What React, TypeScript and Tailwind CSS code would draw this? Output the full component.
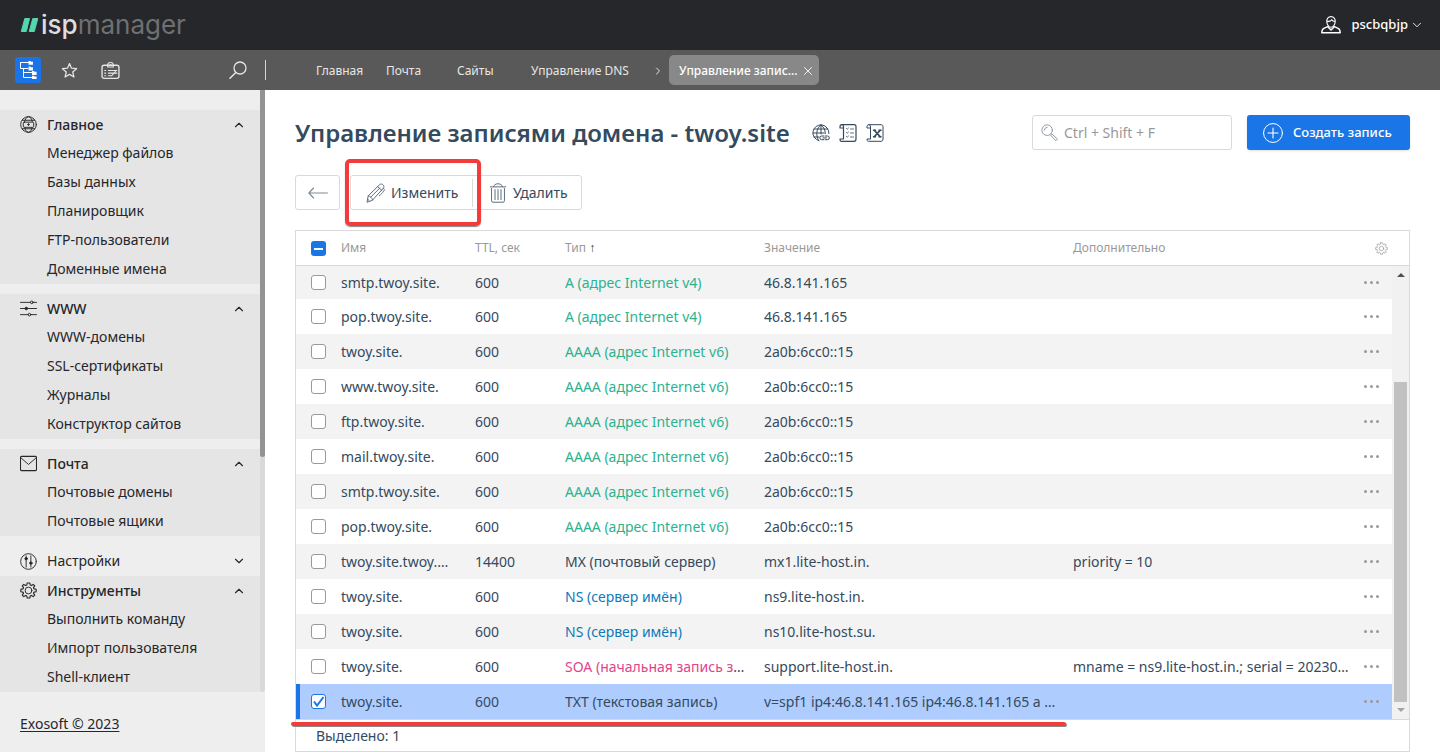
import type { ReactNode } from 'react';
import { ChevronDown, ChevronRight, ChevronUp, X } from 'lucide-react';
import clsx from 'clsx';

interface IconProps {
  className?: string;
  size?: number;
  children?: ReactNode;
}

function Icon({ className, size = 18, children }: IconProps) {
  return (
    <svg
      width={size}
      height={size}
      viewBox="0 0 18 18"
      fill="none"
      stroke="currentColor"
      strokeLinecap="round"
      strokeLinejoin="round"
      className={clsx('shrink-0', className)}
      aria-hidden="true"
    >
      {children}
    </svg>
  );
}

const GEAR =
  'M7.6 1h2.8l.4 2.2 1.3.6 1.9-1.3 1.6 1.6-1.3 1.9.6 1.3 2.2.4v2.6l-2.2.4-.6 1.3 1.3 1.9-1.6 1.6-1.9-1.3-1.3.6-.4 2.2H7.6l-.4-2.2-1.3-.6L4 15.5l-1.6-1.6L3.700 12l-.6-1.300L.9 10.300V7.700l2.200-.4.6-1.300L2.400 4.100 4 2.500l1.900 1.300 1.300-.6z';

const menuIcons = {
  globe: (
    <Icon size={17}>
      <circle cx="9" cy="9" r="8.3" />
      <ellipse cx="9" cy="9" rx="4.4" ry="8.3" />
      <path d="M2.500 4.500h13M2.500 13.500h13" />
      <rect x="3.500" y="6.500" width="11" height="5.500" rx="1" fill="#e5e5e5" />
      <path d="M8 9h2M9 8v2" />
    </Icon>
  ),
  sliders: (
    <Icon size={17}>
      <path d="M.5 2.500h10.500M14 2.500h3.500M.5 9h5M8 9h9.500M.5 15.500h8.300M11.500 15.500h6" />
      <circle cx="12.500" cy="2.500" r="1.400" />
      <circle cx="6.700" cy="9" r="1.400" fill="currentColor" />
      <circle cx="10" cy="15.500" r="1.400" />
    </Icon>
  ),
  mail: (
    <Icon size={17}>
      <rect x=".5" y="1.500" width="17" height="15" rx="1.500" strokeWidth="1.200" />
      <path d="m1.500 3.500 7.500 6.500 7.500-6.500" />
    </Icon>
  ),
  settings: (
    <Icon size={17}>
      <circle cx="9" cy="9" r="8.300" />
      <path d="M6.500 3v2M6.500 7.500V15M11.500 3v6.500M11.500 12v3" />
      <circle cx="6.500" cy="6" r="1.300" fill="currentColor" />
      <circle cx="11.500" cy="10.700" r="1.300" fill="currentColor" />
    </Icon>
  ),
  tools: (
    <Icon size={17}>
      <path d={GEAR} strokeWidth="1.200" />
      <circle cx="9" cy="9" r="3.600" />
    </Icon>
  ),
};

interface MenuSection {
  title: string;
  icon: keyof typeof menuIcons;
  items: string[];
  tight?: boolean;
}

const MENU: MenuSection[] = [
  {
    title: 'Главное',
    icon: 'globe',
    items: ['Менеджер файлов', 'Базы данных', 'Планировщик', 'FTP-пользователи', 'Доменные имена'],
  },
  {
    title: 'WWW',
    icon: 'sliders',
    items: ['WWW-домены', 'SSL-сертификаты', 'Журналы', 'Конструктор сайтов'],
  },
  { title: 'Почта', icon: 'mail', items: ['Почтовые домены', 'Почтовые ящики'] },
  { title: 'Настройки', icon: 'settings', items: [], tight: true },
  {
    title: 'Инструменты',
    icon: 'tools',
    items: ['Выполнить команду', 'Импорт пользователя', 'Shell-клиент'],
  },
];

interface DnsRecord {
  name: string;
  ttl: string;
  type: string;
  value: string;
  extra?: string;
  cut?: boolean;
  selected?: boolean;
}

const A = 'A (адрес Internet v4)';
const AAAA = 'AAAA (адрес Internet v6)';
const NS = 'NS (сервер имён)';

const RECORDS: DnsRecord[] = [
  { name: 'smtp.twoy.site.', ttl: '600', type: A, value: '46.8.141.165' },
  { name: 'pop.twoy.site.', ttl: '600', type: A, value: '46.8.141.165' },
  { name: 'twoy.site.', ttl: '600', type: AAAA, value: '2a0b:6cc0::15' },
  { name: 'www.twoy.site.', ttl: '600', type: AAAA, value: '2a0b:6cc0::15' },
  { name: 'ftp.twoy.site.', ttl: '600', type: AAAA, value: '2a0b:6cc0::15' },
  { name: 'mail.twoy.site.', ttl: '600', type: AAAA, value: '2a0b:6cc0::15' },
  { name: 'smtp.twoy.site.', ttl: '600', type: AAAA, value: '2a0b:6cc0::15' },
  { name: 'pop.twoy.site.', ttl: '600', type: AAAA, value: '2a0b:6cc0::15' },
  { name: 'twoy.site.twoy.…', ttl: '14400', type: 'MX (почтовый сервер)', value: 'mx1.lite-host.in.', extra: 'priority = 10' },
  { name: 'twoy.site.', ttl: '600', type: NS, value: 'ns9.lite-host.in.' },
  { name: 'twoy.site.', ttl: '600', type: NS, value: 'ns10.lite-host.su.' },
  {
    name: 'twoy.site.',
    ttl: '600',
    type: 'SOA (начальная запись з',
    cut: true,
    value: 'support.lite-host.in.',
    extra: 'mname = ns9.lite-host.in.; serial = 20230…',
  },
  {
    name: 'twoy.site.',
    ttl: '600',
    type: 'TXT (текстовая запись)',
    value: 'v=spf1 ip4:46.8.141.165 ip4:46.8.141.165 a …',
    selected: true,
  },
];

const TYPE_COLORS: Record<string, string> = {
  A: 'text-[#2bb291]',
  AAAA: 'text-[#2bb291]',
  NS: 'text-[#0f78b9]',
  SOA: 'text-[#e0448b]',
};

function Header() {
  return (
    <header className="flex h-[50px] items-center justify-between bg-[#26272b] pl-5 pr-4">
      <a href="#" className="flex items-center gap-0.5" aria-label="ispmanager">
        <svg width="19" height="14" viewBox="0 0 19 14" fill="#55d6ae" aria-hidden="true">
          <path d="M4.800.5h4.700L6.300 13.500H1.300zM12.800.5h5l-3.500 13H9.200z" stroke="#55d6ae" strokeLinejoin="round" />
        </svg>
        <span className="font-['Inter'] text-[26px] leading-8 text-[#6f7073]">
          <span className="font-medium text-[#dedede]">isp</span>manager
        </span>
      </a>
      <button type="button" className="flex items-center text-[13px] font-medium text-white">
        <Icon size={20} className="mr-2.5">
          <path d="M9 1.500c-2.500 0-4 1.800-3.800 4.300C5.300 8.500 7 11 9 11s3.700-2.500 3.800-5.200C13 3.300 11.500 1.500 9 1.500zM5.300 5.500c2 .5 3.600 0 4.300-1.300.6 1 1.700 1.500 3.100 1.600" />
          <path d="M6.500 10.300 2.500 12C1.300 12.600.8 13.800.7 16h16.600c-.1-2.200-.6-3.400-1.800-4l-4-1.700M6.300 10.700 9 13.500l2.700-2.800" strokeWidth="1.300" />
        </Icon>
        pscbqbjp
        <ChevronDown size={14} strokeWidth={1.500} className="ml-0.5" />
      </button>
    </header>
  );
}

function TabBar() {
  return (
    <div className="flex h-10 items-center bg-[#595959] text-[#e6e6e6]">
      <div className="flex w-[266px] shrink-0 items-center pl-[15px]">
        <button type="button" aria-label="Меню" className="flex size-[26px] items-center justify-center rounded-[3px] bg-[#1a73e8] text-white">
          <Icon>
            <path d="M1 1.500h9M1.500 1.500v6H9M4.500 7.500v9M4.500 11.500H13M4.500 16.500H13" strokeLinecap="butt" />
            <path d="M9.500 0h2l.6.700H14V3.800H9.500zM9.500 5.500h2l.6.700H14v3.300H9.500zM13 10h2l.6.700h2V14H13zM13 14.800h2l.6.600h2V18H13z" fill="currentColor" stroke="none" />
          </Icon>
        </button>
        <button type="button" aria-label="Избранное" className="ml-5">
          <Icon size={17}>
            <path d="m9 1.700 2.100 4.900 5.400.5-4.100 3.500 1.300 5.300L9 13.100l-4.700 2.800 1.300-5.300-4.100-3.500 5.400-.5z" strokeWidth="1.300" />
          </Icon>
        </button>
        <button type="button" aria-label="Карточка" className="ml-[23px]">
          <Icon size={19}>
            <rect x="1" y="4" width="16" height="12.500" rx="2" strokeWidth="1.300" />
            <path d="M6.300 5.700V4.200a2.700 2.700 0 0 1 5.400 0v1.500zM8.500 3.500h1" />
            <path d="M3.500 9h1M3.500 11.500h1M3.500 14h1M7 9h8M7 11.500h8M7 14h3l4.500-5" />
          </Icon>
        </button>
        <button type="button" aria-label="Поиск" className="ml-auto mr-[18px]">
          <Icon>
            <circle cx="11" cy="7" r="6" strokeWidth="1.300" />
            <path d="M6.800 11.500 1 17.300" strokeWidth="1.500" />
          </Icon>
        </button>
        <span className="h-5 w-px bg-[#d5d5d5]" />
      </div>
      <nav className="flex items-center text-xs *:pt-0.5">
        <a href="#" className="ml-[50px] w-[70px]">Главная</a>
        <a href="#" className="w-[71px]">Почта</a>
        <a href="#" className="w-[74px]">Сайты</a>
        <a href="#" className="w-[120px]">Управление DNS</a>
        <ChevronRight size={14} strokeWidth={2} className="mr-1" />
        <div className="flex h-[30px] w-[150px] items-center justify-between rounded-[5px] bg-[#888] pl-2.5 pr-1 font-medium text-white">
          <a href="#">Управление запис…</a>
          <button type="button" aria-label="Закрыть">
            <X size={14} strokeWidth={1.500} />
          </button>
        </div>
      </nav>
    </div>
  );
}

function Sidebar() {
  return (
    <aside className="flex w-[265px] shrink-0 flex-col bg-[#eee] text-sm text-[#26272b]">
      <div className="flex">
        <nav className="flex-1 pt-5">
          {MENU.map((section) => {
            const open = section.items.length > 0;
            const Chevron = open ? ChevronUp : ChevronDown;
            return (
              <div key={section.title} className={clsx(open && 'bg-[#e5e5e5]', section.tight ? 'mb-0' : 'mb-2.5 last:mb-0')}>
                <button
                  type="button"
                  className={clsx('flex w-full items-center pl-5 pr-3.5', open ? 'h-[29px] font-medium' : 'h-[30px]')}
                >
                  {menuIcons[section.icon]}
                  <span className="ml-2.5">{section.title}</span>
                  <Chevron size={14} strokeWidth={2} className="ml-auto" />
                </button>
                {section.items.map((item) => (
                  <a key={item} href="#" className="block h-[29px] pl-[47px] leading-[27px]">
                    {item}
                  </a>
                ))}
              </div>
            );
          })}
        </nav>
        <div className="w-[5px] rounded-b bg-[#d9d9d9]">
          <div className="h-[61%] rounded-b bg-[#939393]" />
        </div>
      </div>
      <a href="#" className="ml-5 mt-[22px] self-start underline underline-offset-2">
        Exosoft © 2023
      </a>
    </aside>
  );
}

function PageTitle() {
  return (
    <div className="flex h-[35px] items-center">
      <h1 className="text-2xl font-semibold">Управление записями домена - twoy.site</h1>
      <div className="ml-[22px] flex gap-[9px]">
        <button type="button" aria-label="Открыть сайт">
          <Icon>
            <path d="M7 16.700A8 8 0 1 1 16.900 9.500" />
            <path d="M9 1C3.800 4.500 3.800 12 6.500 16.500M9 1c3 2.200 4.300 5.200 4.300 8.700M2.300 5h13.400M1 9h11M2 13h5M9 1v9" />
            <path d="M12 12h-2.300a1.700 1.700 0 0 0 0 3.700H12M13.500 12h2a1.700 1.700 0 0 1 0 3.700h-2M11 13.900h3.500" />
          </Icon>
        </button>
        <button type="button" aria-label="Журнал">
          <Icon>
            <path d="M4.500 14.500V3c0-1.500-.5-2.300-1.800-2.300S1 1.700 1 3v1h3.500M2.700.7h12.600c1 0 1.700.8 1.700 2V15c0 1.500-.7 2.300-2 2.300H2.500C1.300 17.300 1 16.500 1 15h3.500" strokeWidth="1.200" />
            <path d="M7.500 4.500l.7.700L9.500 4M7.500 8.500l.7.700L9.500 8M7.500 12.500l.7.700 1.300-1.200M11.500 5h3M11.500 9h3M11.500 13h3" strokeWidth=".8" />
          </Icon>
        </button>
        <button type="button" aria-label="Экспорт">
          <Icon>
            <path d="M4.500 14.500V3c0-1.500-.5-2.300-1.800-2.300S1 1.700 1 3v1h3.500M2.700.7h12.600c1 0 1.700.8 1.700 2V15c0 1.500-.7 2.300-2 2.300H2.500C1.300 17.300 1 16.500 1 15h3.500" />
            <path d="M8.500 6.500l5.500 6M14 6.500l-5.500 6" strokeWidth="1.800" />
            <path d="M7.500 6.300h2M13 6.300h2M7.500 12.700h2M13 12.700h2" strokeWidth="1.400" />
          </Icon>
        </button>
      </div>
      <label className="ml-auto flex h-[35px] w-[200px] items-center rounded-[3px] border border-[#d9d9d9] pl-2 text-[#8b959e]">
        <Icon size={17}>
          <circle cx="6.500" cy="6.500" r="5.600" />
          <path d="M3.500 6.500a3 3 0 0 1 3-3M10.500 11.500l1-1 6 5.500-1.500 1.500z" />
        </Icon>
        <input
          type="search"
          aria-label="Поиск"
          placeholder="Ctrl + Shift + F"
          className="ml-1.5 min-w-0 flex-1 text-sm outline-none placeholder:text-[#999]"
        />
      </label>
      <button
        type="button"
        className="ml-[15px] flex h-[35px] w-[163px] items-center rounded-[3px] bg-[#1a76e6] pl-4 text-[13px] font-medium text-white shadow"
      >
        <Icon size={20} className="mr-2.5">
          <circle cx="9" cy="9" r="8.500" strokeWidth=".9" />
          <path d="M4.500 9h9M9 4.500v9" />
        </Icon>
        Создать запись
      </button>
    </div>
  );
}

function Toolbar() {
  return (
    <div className="mt-[25px] flex gap-2.5 text-sm">
      <button type="button" aria-label="Назад" className="flex h-[35px] w-[45px] items-center justify-center rounded-[3px] border border-[#d9d9d9] text-[#7f8a95]">
        <Icon size={20}>
          <path d="M5 4.500.8 9 5 13.500M1 9h16.500" />
        </Icon>
      </button>
      <div className="flex h-[35px] items-center rounded-[3px] border border-[#d9d9d9]">
        <div className="relative flex w-[122px] border-r border-[#d9d9d9]">
          <button type="button" className="flex h-7 items-center gap-[5px] pl-[15px]">
            <Icon size={20} className="text-[#5d6e7e]">
              <path
                d="M1 17l1-5.500L12.200 1.600c1-1 2.300-.8 3.200.1s1 2.100.1 3.100L6 15.300zM2 11.500c1.800.4 3.300 1.800 4 3.800M10.500 3.300l4 3.500M4.500 12.500l8-8M1.500 14.500l1.500 1.500M15.500 4.800c2 .7 1.500 2.200-3.500 6.700"
                strokeWidth=".9"
              />
            </Icon>
            Изменить
          </button>
          {/* highlight frame around the edit action */}
          <div className="pointer-events-none absolute -left-1.5 -top-5 h-[67px] w-[136px] rounded-[5px] border-4 border-[#f43b3c] shadow-[0_1px_1px_#888]" />
        </div>
        <button type="button" className="flex h-7 w-[108px] items-center gap-[5px] pl-[15px]">
          <Icon size={20} className="text-[#5d6e7e]">
            <path
              d="M2 3.500h14M5 3.300C5.500-.3 12.500-.3 13 3.300M3.200 5v11c0 .8.400 1.300 1.200 1.300h9.200c.8 0 1.200-.5 1.200-1.300V5M6.300 6v9M9 6v9M11.700 6v9"
              strokeWidth=".9"
            />
          </Icon>
          Удалить
        </button>
      </div>
    </div>
  );
}

function RecordRow({ record }: { record: DnsRecord }) {
  const typeColor = TYPE_COLORS[record.type.split(' ')[0]];
  return (
    <tr className={clsx('h-[35px] first:h-[33px]', record.selected ? 'bg-[#aecdfe]' : 'odd:bg-[#f3f3f3]')}>
      <td className={clsx(record.selected && 'border-l-4 border-[#1a76e6]')}>
        <label className={clsx('relative block size-[15px]', record.selected ? 'ml-[11px]' : 'ml-[15px]')}>
          <input
            type="checkbox"
            defaultChecked={record.selected}
            aria-label={`Выбрать ${record.name}`}
            className="peer block size-[15px] appearance-none rounded-[3px] border border-[#999] bg-white checked:border-[#1a76e6]"
          />
          <svg
            viewBox="0 0 15 15"
            fill="none"
            stroke="#1a76e6"
            strokeWidth="2"
            className="pointer-events-none absolute inset-0 hidden peer-checked:block"
            aria-hidden="true"
          >
            <path d="m3 7.500 3 4L12.500 3" />
          </svg>
        </label>
      </td>
      <td className="truncate">{record.name}</td>
      <td>{record.ttl}</td>
      <td className="truncate">
        <span className={typeColor}>{record.type}</span>
        {record.cut && '…'}
      </td>
      <td className="truncate">{record.value}</td>
      <td className="truncate">{record.extra}</td>
      <td>
        <button type="button" aria-label="Действия" className="ml-2 flex gap-[3px]">
          <span className="size-[3px] rounded-full bg-[#999]" />
          <span className="size-[3px] rounded-full bg-[#999]" />
          <span className="size-[3px] rounded-full bg-[#999]" />
        </button>
      </td>
    </tr>
  );
}

function RecordsTable() {
  return (
    <section className="mt-5 border border-[#d9d9d9]">
      <div className="flex">
        <table className="min-w-0 flex-1 table-fixed border-separate border-spacing-0 text-left text-sm">
          <colgroup>
            <col className="w-[45px]" />
            <col className="w-[134px]" />
            <col className="w-[90px]" />
            <col className="w-[199px]" />
            <col className="w-[309px]" />
            <col />
            <col className="w-9" />
          </colgroup>
          <thead className="text-xs text-[#999]">
            <tr className="h-[35px] *:border-b *:border-[#d9d9d9] *:font-normal">
              <th>
                <label className="relative ml-[15px] block size-[15px]">
                  <input type="checkbox" aria-label="Выбрать все" className="block size-[15px] appearance-none rounded-[3px] bg-[#1a76e6]" />
                  <span className="pointer-events-none absolute inset-x-[3px] top-[7px] h-0.5 bg-white" />
                </label>
              </th>
              <th>Имя</th>
              <th>TTL, сек</th>
              <th>
                Тип <span className="text-[#333]">↑</span>
              </th>
              <th>Значение</th>
              <th>Дополнительно</th>
              <th>
                <button type="button" aria-label="Настройка колонок" className="ml-[19px] block">
                  <Icon size={13}>
                    <path d={GEAR} />
                    <circle cx="9" cy="9" r="3" />
                  </Icon>
                </button>
              </th>
            </tr>
          </thead>
          <tbody>
            {RECORDS.map((record, i) => (
              <RecordRow key={i} record={record} />
            ))}
          </tbody>
        </table>
        <div className="flex w-[17px] shrink-0 flex-col">
          <div className="h-[35px] border-b border-[#d9d9d9]" />
          <div className="flex flex-1 flex-col items-center bg-[#f1f1f1] py-[7px]">
            <svg width="8" height="4" viewBox="0 0 8 4" fill="#505050" aria-hidden="true">
              <path d="M0 4 4 0l4 4z" />
            </svg>
            <div className="mb-1.5 mt-auto h-[73%] w-[13px] bg-[#c1c1c1]" />
            <svg width="8" height="4" viewBox="0 0 8 4" fill="#a3a3a3" aria-hidden="true">
              <path d="m0 0 4 4 4-4z" />
            </svg>
          </div>
        </div>
      </div>
      <div className="relative flex h-8 items-center border-t border-[#d9d9d9] pl-5 text-sm">
        Выделено: 1
        {/* underline below the selected record */}
        <div className="pointer-events-none absolute -left-[5px] top-0.5 h-1 w-[775px] rounded-full bg-[#f43b3c] shadow-[1px_1px_0_#888]" />
      </div>
    </section>
  );
}

export default function App() {
  return (
    <div className="flex min-h-screen flex-col bg-white font-['Noto_Sans',sans-serif]">
      <Header />
      <TabBar />
      <div className="flex flex-1">
        <Sidebar />
        <main className="min-w-0 flex-1 pl-[30px] pr-[30px] pt-[25px] text-[#344a5e]">
          <PageTitle />
          <Toolbar />
          <RecordsTable />
        </main>
      </div>
    </div>
  );
}
